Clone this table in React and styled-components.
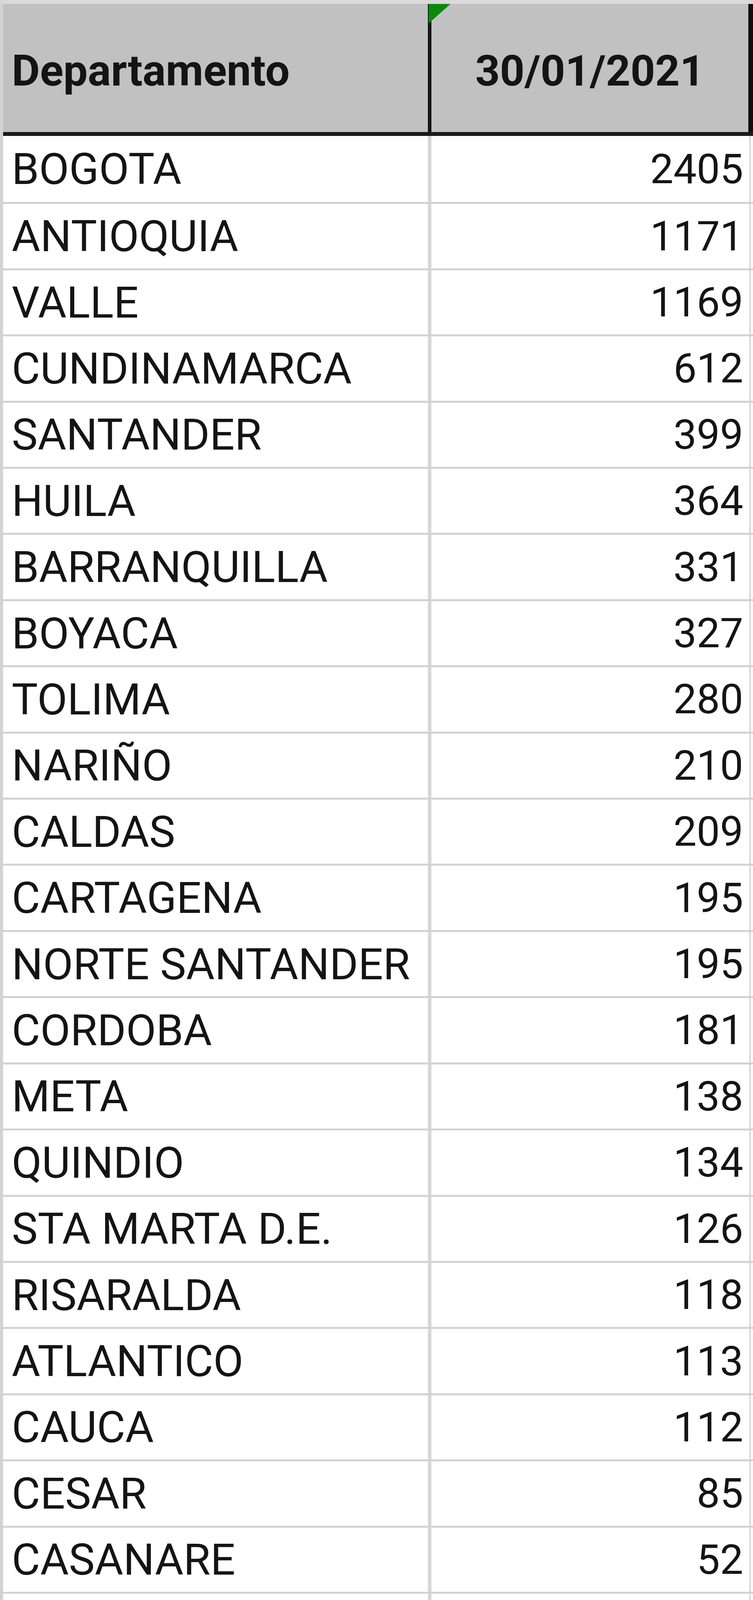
import React from "react";
import styled, { createGlobalStyle } from "styled-components";

const rows = [
  ["BOGOTA", 2405],
  ["ANTIOQUIA", 1171],
  ["VALLE", 1169],
  ["CUNDINAMARCA", 612],
  ["SANTANDER", 399],
  ["HUILA", 364],
  ["BARRANQUILLA", 331],
  ["BOYACA", 327],
  ["TOLIMA", 280],
  ["NARIÑO", 210],
  ["CALDAS", 209],
  ["CARTAGENA", 195],
  ["NORTE SANTANDER", 195],
  ["CORDOBA", 181],
  ["META", 138],
  ["QUINDIO", 134],
  ["STA MARTA D.E.", 126],
  ["RISARALDA", 118],
  ["ATLANTICO", 113],
  ["CAUCA", 112],
  ["CESAR", 85],
  ["CASANARE", 52],
  ["SUCRE", 46],
  ["MAGDALENA", 40],
  ["PUTUMAYO", 32],
  ["CAQUETA", 26],
  ["CHOCO", 20],
  ["ARAUCA", 18],
  ["BOLIVAR", 18],
  ["GUAJIRA", 17],
  ["AMAZONAS", 12],
  ["VICHADA", 8],
  ["GUAVIARE", 5],
  ["SAN ANDRES", 5],
];

const App = () => {
  return (
    <>
      <GlobalStyle />
      <Sheet>
        <HeadRow>
          <NameCell bold>Departamento</NameCell>
          <HeadValue>
            <Marker />
            30/01/2021
          </HeadValue>
        </HeadRow>
        <Body>
          {rows.map(([name, value], i) => (
            <Row key={name} first={i === 0}>
              <NameCell>{name}</NameCell>
              <ValueCell>{value}</ValueCell>
            </Row>
          ))}
        </Body>
        <TotalRow>
          <NameCell bold>TOTAL</NameCell>
          <HeadValue small>
            <Marker />
            9173
          </HeadValue>
        </TotalRow>
      </Sheet>
    </>
  );
};

export default App;

const GlobalStyle = createGlobalStyle`
  html, body {
    margin: 0;
    padding: 0;
    background: #ffffff;
  }
  * {
    box-sizing: border-box;
  }
`;

const Sheet = styled.div`
  width: 1927px;
  height: 6290px;
  display: flex;
  flex-direction: column;
  border-top: 10px solid #dadada;
  border-left: 8px solid #d3d3d3;
  background: #ffffff;
  font-family: Roboto, "Liberation Sans", sans-serif;
  color: #141414;
  overflow: hidden;
`;

const HeadRow = styled.div`
  display: grid;
  grid-template-columns: 1087px 1fr;
  height: 338px;
  background: #c1c1c1;
  border-bottom: 10px solid #1a1a1a;
  padding-top: 14px;
`;

const TotalRow = styled.div`
  display: grid;
  grid-template-columns: 1087px 1fr;
  height: 182px;
  background: #c1c1c1;
  border-top: 9px solid #1a1a1a;
  border-bottom: 10px solid #111111;
  padding-top: 14px;
`;

const Body = styled.div`
  display: flex;
  flex-direction: column;
`;

const Row = styled.div`
  display: grid;
  grid-template-columns: 1087px 1fr;
  height: 169.41px;
  padding-right: 5px;
  border-top: ${(p) => (p.first ? "none" : "5px solid #d2d2d2")};
`;

const NameCell = styled.div`
  display: flex;
  align-items: center;
  padding-left: 22px;
  font-size: ${(p) => (p.bold ? "111px" : "112px")};
  font-weight: ${(p) => (p.bold ? 700 : 400)};
  white-space: nowrap;
`;

const ValueCell = styled.div`
  display: flex;
  align-items: center;
  justify-content: flex-end;
  padding-right: 15px;
  font-size: 106px;
  border-left: 9px solid #d6d6d6;
  border-right: 5px solid #dcdcdc;
`;

const HeadValue = styled.div`
  position: relative;
  display: flex;
  align-items: center;
  justify-content: center;
  font-size: ${(p) => (p.small ? "106px" : "110px")};
  font-weight: 700;
  border-left: 9px solid #141414;
  border-right: 12px solid #111111;
  margin-top: -14px;
  padding-top: 14px;
`;

const Marker = styled.span`
  position: absolute;
  top: 0;
  left: -7px;
  width: 56px;
  height: 50px;
  background: #0a8a0a;
  clip-path: polygon(0 0, 100% 0, 0 100%);
`;
